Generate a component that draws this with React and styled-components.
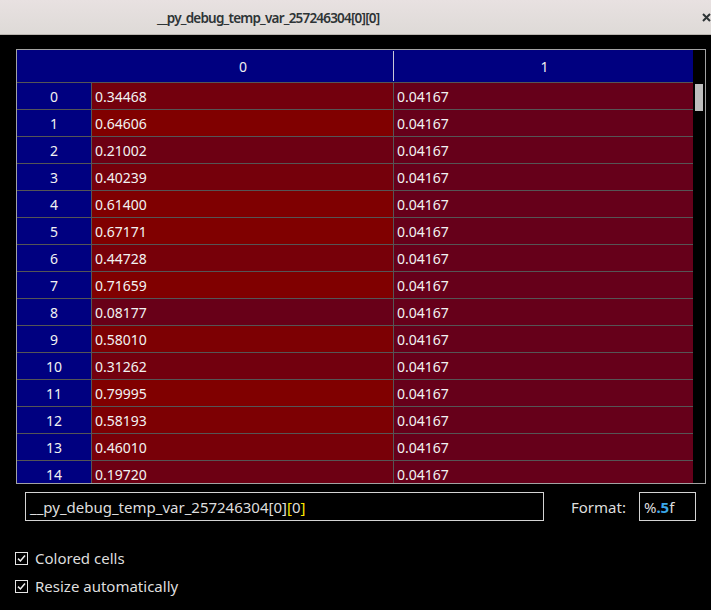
import React from "react"
import styled, { createGlobalStyle } from "styled-components"

const GlobalStyle = createGlobalStyle`
  html, body {
    margin: 0;
    padding: 0;
    background: #000;
  }
  body {
    font-family: "Noto Sans", "Open Sans", sans-serif;
  }
`

const VALUES = [
  0.34468, 0.64606, 0.21002, 0.40239, 0.614, 0.67171, 0.44728, 0.71659,
  0.08177, 0.5801, 0.31262, 0.79995, 0.58193, 0.4601, 0.1972,
]
const COL1 = 0.04167
const VMIN = 0.04167
const VMAX = 0.79995

function cellColor(v) {
  const t = (VMAX - v) / (VMAX - VMIN)
  const f = Math.max(0, Math.min(1, (t - 0.2) / 0.8))
  const r = Math.round(128 - 26 * f)
  const b = Math.round(26 * f)
  return `rgb(${r}, 0, ${b})`
}

const Window = styled.div`
  width: 711px;
  height: 610px;
  display: flex;
  flex-direction: column;
  background: #000;
  overflow: hidden;
`

const TitleBar = styled.div`
  height: 34px;
  flex: none;
  display: flex;
  align-items: center;
  justify-content: space-between;
  padding-left: 157px;
  background: linear-gradient(#e8e1e1, #dedad7);
  border-bottom: 1px solid #b9b4b0;
`

const Title = styled.div`
  font-size: 13.5px;
  font-weight: 600;
  letter-spacing: -0.8px;
  color: #2e3436;
  padding-top: 1px;
`

const CloseButton = styled.div`
  width: 10px;
  height: 10px;
  margin-right: 0;
  margin-top: 0;
  display: flex;
  align-items: center;
  justify-content: center;
`

const Content = styled.div`
  padding: 14px 5px 0 16px;
  display: flex;
  flex-direction: column;
`

const TableFrame = styled.div`
  width: 688px;
  height: 433px;
  border: 1px solid #a3a3a3;
  display: flex;
`

const Grid = styled.div`
  width: 678px;
  display: flex;
  flex-direction: column;
  overflow: hidden;
`

const Row = styled.div`
  display: grid;
  grid-template-columns: 75px 302px 301px;
  flex: none;
`

const HeaderCell = styled.div`
  height: 32px;
  background: #000080;
  border-bottom: 1px solid #555;
  color: #f0f0f0;
  font-size: 14px;
  display: flex;
  align-items: center;
  justify-content: center;
  position: relative;
  ${(p) =>
    p.$divider &&
    `
    &::after {
      content: "";
      position: absolute;
      right: 0;
      top: 1px;
      bottom: 1px;
      width: 1px;
      background: #c8c8d8;
    }
  `}
`

const IndexCell = styled.div`
  height: 26px;
  background: #000080;
  border-right: 1px solid #555;
  border-bottom: 1px solid #555;
  color: #f2f2f2;
  font-size: 14px;
  display: flex;
  align-items: center;
  justify-content: center;
`

const ValueCell = styled.div`
  height: 26px;
  border-right: 1px solid #555;
  border-bottom: 1px solid #555;
  color: #f2f2f2;
  font-size: 14px;
  display: flex;
  align-items: center;
  padding-left: 3px;
`

const ScrollTrack = styled.div`
  width: 10px;
  background: #000;
  padding-top: 34px;
  padding-left: 1px;
  border-left: 1px solid #000;
`

const ScrollThumb = styled.div`
  width: 8px;
  height: 27px;
  background: #bebebe;
`

const Controls = styled.div`
  display: flex;
  align-items: center;
  margin-top: 8px;
  margin-left: 9px;
`

const NameField = styled.div`
  width: 513px;
  height: 27px;
  border: 1px solid #d4d4d4;
  padding-left: 4px;
  display: flex;
  align-items: center;
  font-size: 15px;
  color: #dedede;
`

const Bracket = styled.span`
  color: ${(p) => (p.$match ? "#ffe600" : "#dedede")};
`

const FormatLabel = styled.div`
  margin-left: 27px;
  font-size: 15px;
  color: #dedede;
`

const FormatField = styled.div`
  margin-left: 13px;
  width: 51px;
  height: 27px;
  border: 1px solid #d4d4d4;
  padding-left: 4px;
  display: flex;
  align-items: center;
  font-size: 15px;
  color: #dedede;
`

const Spec = styled.span`
  color: #3aa8ea;
  font-weight: 700;
`

const Options = styled.div`
  margin-top: 27px;
  margin-left: -2px;
  display: flex;
  flex-direction: column;
  gap: 8px;
`

const CheckRow = styled.label`
  display: flex;
  align-items: center;
  gap: 7px;
  height: 20px;
  font-size: 15px;
  color: #dedede;
`

const Box = styled.span`
  width: 11px;
  height: 11px;
  margin-left: 1px;
  border: 1px solid #e6e6e6;
  display: flex;
  align-items: center;
  justify-content: center;
`

function Check({ children }) {
  return (
    <CheckRow>
      <Box>
        <svg width="9" height="9" viewBox="0 0 9 9">
          <path d="M1 4.6 L3.4 7 L8 1.5" fill="none" stroke="#f0f0f0" strokeWidth="1.5" />
        </svg>
      </Box>
      {children}
    </CheckRow>
  )
}

export default function App() {
  return (
    <>
      <GlobalStyle />
      <Window>
        <TitleBar>
          <Title>__py_debug_temp_var_257246304[0][0]</Title>
          <CloseButton>
            <svg width="9" height="9" viewBox="0 0 9 9">
              <path d="M1 1 L8 8 M8 1 L1 8" stroke="#2e3436" strokeWidth="2" />
            </svg>
          </CloseButton>
        </TitleBar>
        <Content>
          <TableFrame>
            <Grid>
              <Row>
                <HeaderCell />
                <HeaderCell $divider>0</HeaderCell>
                <HeaderCell>1</HeaderCell>
              </Row>
              {VALUES.map((v, i) => (
                <Row key={i}>
                  <IndexCell>{i}</IndexCell>
                  <ValueCell style={{ background: cellColor(v) }}>{v.toFixed(5)}</ValueCell>
                  <ValueCell style={{ background: cellColor(COL1) }}>{COL1.toFixed(5)}</ValueCell>
                </Row>
              ))}
            </Grid>
            <ScrollTrack>
              <ScrollThumb />
            </ScrollTrack>
          </TableFrame>
          <Controls>
            <NameField>
              __py_debug_temp_var_257246304[0]<Bracket $match>[</Bracket>0<Bracket $match>]</Bracket>
            </NameField>
            <FormatLabel>Format:</FormatLabel>
            <FormatField>
              %<Spec>.5</Spec>f
            </FormatField>
          </Controls>
          <Options>
            <Check>Colored cells</Check>
            <Check>Resize automatically</Check>
          </Options>
        </Content>
      </Window>
    </>
  )
}
